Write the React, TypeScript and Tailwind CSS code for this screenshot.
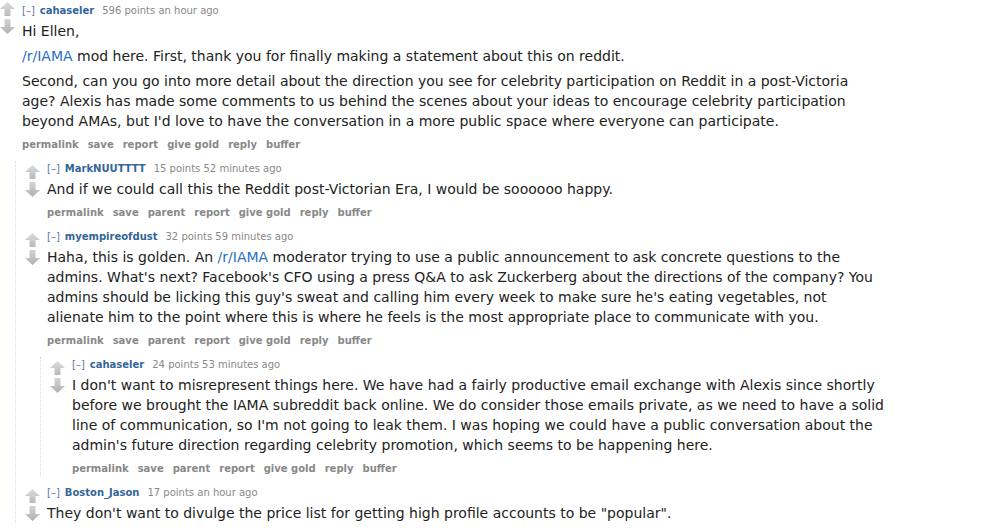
import React from "react";

function Arrows({ top }: { top: string }) {
  return (
    <div className={`flex w-[15px] shrink-0 flex-col items-center gap-[3px] ${top}`}>
      <svg width="15" height="14" viewBox="0 0 15 14">
        <defs>
          <linearGradient id="ga" x1="0" y1="0" x2="0" y2="1">
            <stop offset="0" stopColor="#dcdcdc" />
            <stop offset="1" stopColor="#bababa" />
          </linearGradient>
        </defs>
        <path d="M7.5 0 L15 7 L10.5 7 L10.5 14 L4.5 14 L4.5 7 L0 7 Z" fill="url(#ga)" />
      </svg>
      <svg width="15" height="15" viewBox="0 0 15 15">
        <defs>
          <linearGradient id="gb" x1="0" y1="0" x2="0" y2="1">
            <stop offset="0" stopColor="#d4d4d4" />
            <stop offset="1" stopColor="#b0b0b0" />
          </linearGradient>
        </defs>
        <path d="M4.5 0 L10.5 0 L10.5 8 L15 8 L7.5 15 L0 8 L4.5 8 Z" fill="url(#gb)" />
      </svg>
    </div>
  );
}

function Tagline({ user, pts, time }: { user: string; pts: string; time: string }) {
  return (
    <div className="flex h-[16px] items-center whitespace-nowrap text-[10px] leading-[16px]">
      <span className="text-[#5a76a0]">[–]</span>
      <span className="ml-[5px] font-bold text-[#336699]">{user}</span>
      <span className="ml-[8px] text-[#888]">{pts} points {time}</span>
    </div>
  );
}

function Buttons({ items }: { items: string[] }) {
  return (
    <div className="mt-[6px] flex h-[16px] items-center gap-[9px] whitespace-nowrap text-[10px] font-bold leading-[16px] text-[#888]">
      {items.map((b) => (
        <span key={b}>{b}</span>
      ))}
    </div>
  );
}

const L = ({ children }: { children: React.ReactNode }) => (
  <span className="text-[#2a6fbd]">{children}</span>
);

type C = {
  user: string;
  pts: string;
  time: string;
  paras: React.ReactNode[][];
  buttons: string[];
  arrowTop?: string;
};

function Comment({ c, children }: { c: C; children?: React.ReactNode }) {
  return (
    <div className="flex flex-col">
      <div className="flex">
        <Arrows top={c.arrowTop ?? "mt-[4px]"} />
        <div className="ml-[7px] flex flex-col">
          <Tagline user={c.user} pts={c.pts} time={c.time} />
          <div className="mt-[2px] flex flex-col gap-[5px] text-[14px] leading-[20px] text-[#222]">
            {c.paras.map((p, i) => (
              <div key={i} className="flex flex-col whitespace-nowrap">
                {p.map((line, j) => (
                  <div key={j}>{line}</div>
                ))}
              </div>
            ))}
          </div>
          {c.buttons.length > 0 && <Buttons items={c.buttons} />}
        </div>
      </div>
      {children && (
        <div className="ml-[15px] mt-[8px] flex flex-col gap-[8px] border-l border-dotted border-[#d6d6f2] pl-[9px]">
          {children}
        </div>
      )}
    </div>
  );
}

const B1 = ["permalink", "save", "report", "give gold", "reply", "buffer"];
const B2 = ["permalink", "save", "parent", "report", "give gold", "reply", "buffer"];

export default function App() {
  return (
    <div className="h-[530px] w-[998px] overflow-hidden bg-white pt-[3px] font-['DejaVu_Sans',Verdana,sans-serif]">
      <Comment
        c={{
          user: "cahaseler",
          pts: "596",
          time: "an hour ago",
          arrowTop: "mt-[-1px]",
          paras: [
            ["Hi Ellen,"],
            [
              <>
                <L>/r/IAMA</L> mod here. First, thank you for finally making a statement about this on reddit.
              </>,
            ],
            [
              "Second, can you go into more detail about the direction you see for celebrity participation on Reddit in a post-Victoria",
              "age? Alexis has made some comments to us behind the scenes about your ideas to encourage celebrity participation",
              "beyond AMAs, but I'd love to have the conversation in a more public space where everyone can participate.",
            ],
          ],
          buttons: B1,
        }}
      >
        <Comment
          c={{
            user: "MarkNUUTTTT",
            pts: "15",
            time: "52 minutes ago",
            paras: [["And if we could call this the Reddit post-Victorian Era, I would be soooooo happy."]],
            buttons: B2,
          }}
        />
        <Comment
          c={{
            user: "myempireofdust",
            pts: "32",
            time: "59 minutes ago",
            paras: [
              [
                <>
                  Haha, this is golden. An <L>/r/IAMA</L> moderator trying to use a public announcement to ask concrete questions to the
                </>,
                "admins. What's next? Facebook's CFO using a press Q&A to ask Zuckerberg about the directions of the company? You",
                "admins should be licking this guy's sweat and calling him every week to make sure he's eating vegetables, not",
                "alienate him to the point where this is where he feels is the most appropriate place to communicate with you.",
              ],
            ],
            buttons: B2,
          }}
        >
          <Comment
            c={{
              user: "cahaseler",
              pts: "24",
              time: "53 minutes ago",
              paras: [
                [
                  "I don't want to misrepresent things here. We have had a fairly productive email exchange with Alexis since shortly",
                  "before we brought the IAMA subreddit back online. We do consider those emails private, as we need to have a solid",
                  "line of communication, so I'm not going to leak them. I was hoping we could have a public conversation about the",
                  "admin's future direction regarding celebrity promotion, which seems to be happening here.",
                ],
              ],
              buttons: B2,
            }}
          />
        </Comment>
        <Comment
          c={{
            user: "Boston_Jason",
            pts: "17",
            time: "an hour ago",
            paras: [["They don't want to divulge the price list for getting high profile accounts to be \"popular\"."]],
            buttons: [],
          }}
        />
      </Comment>
    </div>
  );
}
